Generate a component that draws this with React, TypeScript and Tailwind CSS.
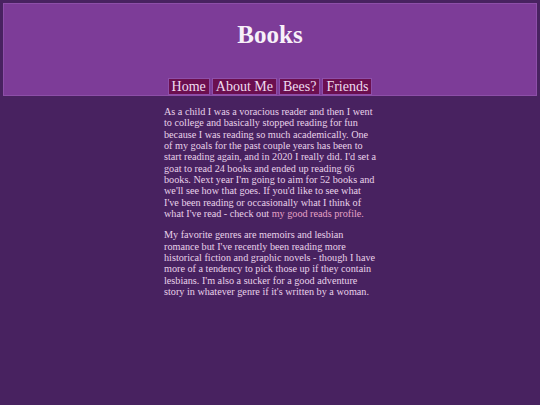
const NAV = ['Home', 'About Me', 'Bees?', 'Friends']

export default function App() {
  return (
    <div
      className="min-h-[405px] bg-[#482260] px-[3px] pt-[3px] text-[#e8d2ea]"
      style={{ fontFamily: '"Liberation Serif", "Times New Roman", serif' }}
    >
      <header className="flex h-[93px] flex-col items-center border border-[#8d4fa8] bg-[#7d3c98]">
        <h1 className="mt-[18px] text-[25px] font-bold leading-none text-[#f7f0f8]">Books</h1>
        <nav className="mt-auto flex gap-[2px]">
          {NAV.map((n) => (
            <a
              key={n}
              href="#"
              className="border border-[#8d4fa8] bg-[#6b0f4f] px-[3px] text-[14px] leading-[15px] text-[#efdcef]"
            >
              {n}
            </a>
          ))}
        </nav>
      </header>

      <main className="mx-auto w-[214px] pl-[1px] pt-[10px] text-[10.2px] leading-[11.35px]">
        <p>
          As a child I was a voracious reader and then I went to college and basically stopped
          reading for fun because I was reading so much academically. One of my goals for the past
          couple years has been to start reading again, and in 2020 I really did. I'd set a goat to
          read 24 books and ended up reading 66 books. Next year I'm going to aim for 52 books and
          we'll see how that goes. If you'd like to see what I've been reading or occasionally what I
          think of what I've read - check out{' '}
          <a href="#" className="text-[#e6a3c6]">
            my good reads profile.
          </a>
        </p>
        <p className="mt-[10px]">
          My favorite genres are memoirs and lesbian romance but I've recently been reading more
          historical fiction and graphic novels - though I have more of a tendency to pick those up if
          they contain lesbians. I'm also a sucker for a good adventure story in whatever genre if
          it's written by a woman.
        </p>
      </main>
    </div>
  )
}
